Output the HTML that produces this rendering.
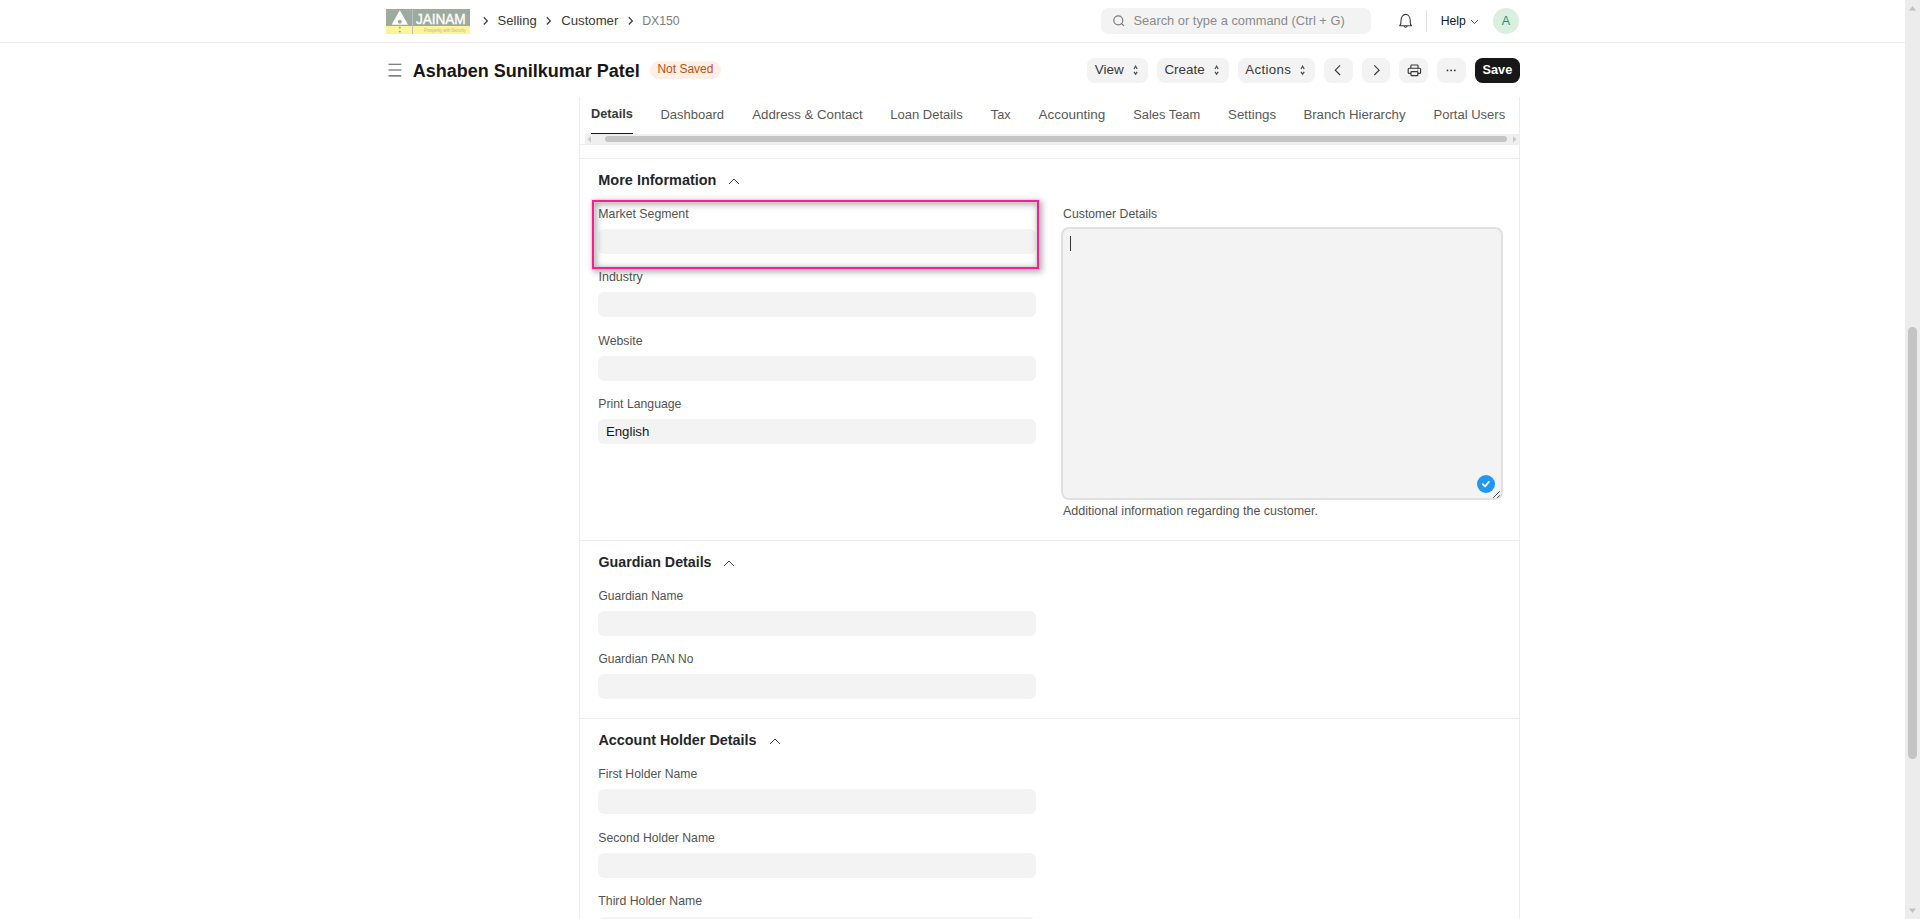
<!DOCTYPE html>
<html>
<head>
<meta charset="utf-8">
<style>
html,body{margin:0;padding:0;width:1920px;height:919px;overflow:hidden;background:#fff;}
body{font-family:"Liberation Sans",sans-serif;position:relative;color:#383838;}
.a{position:absolute;white-space:nowrap;line-height:1;}
svg{position:absolute;overflow:visible;}
.nav{position:absolute;left:0;top:0;width:1905px;height:42px;background:#fff;border-bottom:1px solid #ececec;}
.page{position:absolute;left:0;top:43px;width:1905px;height:876px;background:#fff;}
.btn{position:absolute;top:58px;height:25px;background:#f3f3f3;border-radius:7.5px;}
.card{position:absolute;left:579px;top:97px;width:939px;height:830px;border-left:1px solid #ededed;border-right:1px solid #ededed;background:#fff;}
.hline{position:absolute;height:1px;background:#ededed;}
.lbl{position:absolute;white-space:nowrap;line-height:1;color:#525252;}
.inp{position:absolute;left:598px;width:438px;height:25px;background:#f3f3f3;border-radius:6px;}
.sec{position:absolute;white-space:nowrap;line-height:1;font-weight:700;color:#1f272e;}
.tab{position:absolute;white-space:nowrap;line-height:1;color:#585858;top:108px;}
.sb{position:absolute;left:1905px;top:0;width:15px;height:919px;background:#ececec;}
</style>
</head>
<body>
<div class="page"></div>

<!-- NAVBAR -->
<div class="nav"></div>
<!-- logo -->
<div style="position:absolute;left:386px;top:9px;width:84px;height:25px;overflow:hidden;">
  <div style="position:absolute;left:0;top:0;width:84px;height:16.5px;background:#9dab9f;"></div>
  <div style="position:absolute;left:0;top:16.5px;width:84px;height:8.5px;background:#fcf39a;"></div>
  <div style="position:absolute;left:26px;top:0;width:1px;height:25px;background:#b8c3ba;"></div>
  <svg style="left:0;top:0" width="84" height="25" viewBox="0 0 84 25">
    <polygon points="13.8,1.2 5.6,15.8 22,15.8" fill="#fff"/>
    <circle cx="13.8" cy="12.7" r="2" fill="#9dab9f"/>
    <circle cx="13.8" cy="18.6" r="0.9" fill="#8e9a8f"/>
    <circle cx="13.8" cy="22.6" r="0.9" fill="#8e9a8f"/>
  </svg>
  <div class="a" style="left:30.2px;top:2.4px;font-size:15.3px;font-weight:400;color:#fff;transform:scaleX(0.895);transform-origin:0 0;letter-spacing:-0.1px;-webkit-text-stroke:0.35px #fff;">JAINAM</div>
  <div class="a" style="left:38px;top:18.6px;font-size:5px;color:#bdbc8e;transform:scaleX(0.8);transform-origin:0 0;">Prosperity with Security</div>
</div>
<!-- breadcrumbs -->
<svg style="left:481px;top:16px" width="8" height="10" viewBox="0 0 8 10"><path d="M2.8 1.3 L6.3 4.9 L2.8 8.5" fill="none" stroke="#383838" stroke-width="1.25"/></svg>
<div class="a" style="left:497.6px;top:14.09px;font-size:13px;color:#383838;">Selling</div>
<svg style="left:544px;top:16px" width="8" height="10" viewBox="0 0 8 10"><path d="M2.8 1.3 L6.3 4.9 L2.8 8.5" fill="none" stroke="#383838" stroke-width="1.25"/></svg>
<div class="a" style="left:561.2px;top:14.09px;font-size:13.2px;color:#383838;">Customer</div>
<svg style="left:626px;top:16px" width="8" height="10" viewBox="0 0 8 10"><path d="M2.8 1.3 L6.3 4.9 L2.8 8.5" fill="none" stroke="#383838" stroke-width="1.25"/></svg>
<div class="a" style="left:642.2px;top:14.6px;font-size:12.25px;color:#7c7c7c;">DX150</div>

<!-- search -->
<div style="position:absolute;left:1101px;top:8px;width:270px;height:26px;background:#f3f3f3;border-radius:7px;"></div>
<svg style="left:1112px;top:14px" width="14" height="14" viewBox="0 0 14 14"><circle cx="6.3" cy="6.3" r="4.5" fill="none" stroke="#7c7c7c" stroke-width="1.2"/><path d="M9.5 9.6 L11.6 11.5" stroke="#7c7c7c" stroke-width="1.2" stroke-linecap="round"/></svg>
<div class="a" style="left:1133.5px;top:15.2px;font-size:12.87px;color:#8a8a8a;">Search or type a command (Ctrl + G)</div>
<!-- bell -->
<svg style="left:1398px;top:13px" width="15" height="16" viewBox="0 0 15 16"><path d="M2.6 11.6 C2.8 10.6 3 9.5 3 7.6 C3 4.3 4.8 1.4 7.6 1.4 C10.4 1.4 12.2 4.3 12.2 7.6 C12.2 9.5 12.4 10.6 12.6 11.6 L13.4 12.2 C13.6 12.5 13.4 12.8 13.1 12.8 L2.1 12.8 C1.8 12.8 1.6 12.5 1.8 12.2 Z" fill="none" stroke="#383838" stroke-width="1.1" stroke-linejoin="round"/><path d="M6.2 13 C6.2 14.6 9 14.6 9 13" fill="none" stroke="#383838" stroke-width="1.1"/></svg>
<div style="position:absolute;left:1426px;top:10px;width:1px;height:22px;background:#e2e2e2;"></div>
<div class="a" style="left:1440.7px;top:15.1px;font-size:12.25px;color:#171717;">Help</div>
<svg style="left:1470px;top:19px" width="9" height="6" viewBox="0 0 9 6"><path d="M1 1 L4.5 4.5 L8 1" fill="none" stroke="#555" stroke-width="1"/></svg>
<div style="position:absolute;left:1493px;top:8px;width:26px;height:26px;border-radius:50%;background:#daf0df;"></div>
<div class="a" style="left:1501.8px;top:15px;font-size:12.44px;color:#2d8a6c;">A</div>

<!-- PAGE HEAD -->
<svg style="left:388px;top:63px" width="14" height="14" viewBox="0 0 14 14"><path d="M0.5 1.2 H13.3 M0.5 7 H13.3 M0.5 12.8 H13.3" stroke="#555" stroke-width="1.15"/></svg>
<div class="a" style="left:412.7px;top:61.76px;font-size:18px;font-weight:700;color:#171717;">Ashaben Sunilkumar Patel</div>
<div style="position:absolute;left:650px;top:61px;width:71px;height:18px;border-radius:9px;background:#fef0e6;"></div>
<div class="a" style="left:657.4px;top:62.64px;font-size:12px;color:#c24e12;">Not Saved</div>

<div class="btn" style="left:1087px;width:61px;"></div>
<div class="a" style="left:1094.7px;top:63px;font-size:13.49px;color:#383838;">View</div>
<div class="btn" style="left:1157px;width:72px;"></div>
<div class="a" style="left:1164.4px;top:63px;font-size:13.43px;color:#383838;">Create</div>
<div class="btn" style="left:1238px;width:77px;"></div>
<div class="a" style="left:1245.2px;top:63.2px;font-size:13.3px;letter-spacing:0.34px;color:#383838;">Actions</div>
<svg style="left:1132px;top:64px" width="8" height="12" viewBox="0 0 8 12"><path d="M2 5 L3.6 2.3 L5.2 5 M2 7.8 L3.6 10.2 L5.2 7.8" fill="none" stroke="#4a4a4a" stroke-width="1.2"/></svg>
<svg style="left:1213px;top:64px" width="8" height="12" viewBox="0 0 8 12"><path d="M2 5 L3.6 2.3 L5.2 5 M2 7.8 L3.6 10.2 L5.2 7.8" fill="none" stroke="#4a4a4a" stroke-width="1.2"/></svg>
<svg style="left:1299px;top:64px" width="8" height="12" viewBox="0 0 8 12"><path d="M2 5 L3.6 2.3 L5.2 5 M2 7.8 L3.6 10.2 L5.2 7.8" fill="none" stroke="#4a4a4a" stroke-width="1.2"/></svg>

<div class="btn" style="left:1324px;width:29px;"></div>
<svg style="left:1324px;top:58px" width="29" height="25" viewBox="0 0 29 25"><path d="M16.1 7.4 L11.3 12.2 L16.1 17" fill="none" stroke="#383838" stroke-width="1.15"/></svg>
<div class="btn" style="left:1362px;width:28px;"></div>
<svg style="left:1362px;top:58px" width="28" height="25" viewBox="0 0 28 25"><path d="M12.3 7.4 L17.1 12.2 L12.3 17" fill="none" stroke="#383838" stroke-width="1.15"/></svg>
<div class="btn" style="left:1399px;width:29px;"></div>
<svg style="left:1399px;top:58px" width="29" height="25" viewBox="0 0 29 25"><path d="M11.9 10.2 V7.8 C11.9 7.3 12.2 7 12.7 7 H18.2 C18.7 7 19 7.3 19 7.8 V10.2" fill="none" stroke="#383838" stroke-width="1.15"/><path d="M12 15.4 H10.2 C9.6 15.4 9.2 15 9.2 14.4 V11.2 C9.2 10.6 9.6 10.2 10.2 10.2 H20.6 C21.2 10.2 21.6 10.6 21.6 11.2 V14.4 C21.6 15 21.2 15.4 20.6 15.4 H18.8" fill="none" stroke="#383838" stroke-width="1.15"/><rect x="12" y="13.6" width="6.8" height="4" rx="0.6" fill="none" stroke="#383838" stroke-width="1.15"/><circle cx="18.6" cy="12" r="0.5" fill="#555"/></svg>
<div class="btn" style="left:1437px;width:29px;"></div>
<svg style="left:1437px;top:58px" width="29" height="25" viewBox="0 0 29 25"><circle cx="10.5" cy="12.4" r="0.9" fill="#383838"/><circle cx="14.1" cy="12.4" r="0.9" fill="#383838"/><circle cx="17.8" cy="12.4" r="0.9" fill="#383838"/></svg>
<div class="btn" style="left:1475px;width:45px;background:#171717;"></div>
<div class="a" style="left:1482.5px;top:64px;font-size:12.72px;font-weight:700;color:#fff;">Save</div>

<!-- CARD -->
<div class="card"></div>

<!-- tabs -->
<div class="tab" style="left:591.1px;top:108px;font-weight:700;font-size:12.72px;color:#383838;">Details</div>
<div style="position:absolute;left:591px;top:133px;width:42px;height:1px;background:#171717;"></div>
<div class="tab" style="left:660.4px;font-size:13px;">Dashboard</div>
<div class="tab" style="left:752.2px;font-size:13.25px;">Address &amp; Contact</div>
<div class="tab" style="left:890.3px;font-size:13.02px;">Loan Details</div>
<div class="tab" style="left:990.8px;top:108.6px;font-size:12.72px;">Tax</div>
<div class="tab" style="left:1038.4px;font-size:13.5px;">Accounting</div>
<div class="tab" style="left:1133.2px;top:108.5px;font-size:12.89px;">Sales Team</div>
<div class="tab" style="left:1228.1px;font-size:13.28px;">Settings</div>
<div class="tab" style="left:1303.4px;font-size:13.22px;">Branch Hierarchy</div>
<div class="tab" style="left:1433.6px;font-size:13.03px;">Portal Users</div>
<!-- tab scrollbar -->
<div style="position:absolute;left:585px;top:134px;width:934px;height:10px;background:#efefef;"></div>
<div style="position:absolute;left:605px;top:136px;width:902px;height:6px;background:#c5c5c5;border-radius:3px;"></div>
<svg style="left:587px;top:135.5px" width="5" height="7" viewBox="0 0 5 7"><path d="M4 0.2 L0.8 3.3 L4 6.4 Z" fill="#c6c6c6"/></svg>
<svg style="left:1512px;top:135.5px" width="5" height="7" viewBox="0 0 5 7"><path d="M1 0.2 L4.2 3.3 L1 6.4 Z" fill="#c6c6c6"/></svg>
<div class="hline" style="left:580px;top:144px;width:939px;background:#efefef;"></div>
<div class="hline" style="left:580px;top:158px;width:939px;"></div>

<!-- More Information -->
<div class="sec" style="left:598.3px;top:172.75px;font-size:14.47px;">More Information</div>
<svg style="left:728px;top:177px" width="12" height="8" viewBox="0 0 12 8"><path d="M1 7 L6 2 L11 7" fill="none" stroke="#444" stroke-width="1"/></svg>

<div class="lbl" style="left:598.3px;top:207.87px;font-size:12.32px;">Market Segment</div>
<div class="inp" style="top:229px;"></div>
<div class="lbl" style="left:598.5px;top:270.83px;font-size:12.48px;">Industry</div>
<div class="inp" style="top:292px;"></div>
<div class="lbl" style="left:598.3px;top:335.19px;font-size:12.3px;">Website</div>
<div class="inp" style="top:356px;"></div>
<div class="lbl" style="left:598.3px;top:398.23px;font-size:12.25px;">Print Language</div>
<div class="inp" style="top:419px;"></div>
<div class="a" style="left:605.9px;top:425px;font-size:13.26px;color:#171717;">English</div>

<!-- pink annotation -->
<div style="position:absolute;left:592px;top:200px;width:447px;height:69px;box-sizing:border-box;border:2px solid #ff1b8d;box-shadow:0 0 0 1px rgba(200,222,212,0.5), 1.5px 1.5px 6px 1px rgba(0,0,0,0.32), inset 0 0 0 1px rgba(200,222,212,0.5), inset 1.5px 1.5px 6px 1px rgba(0,0,0,0.32);"></div>

<div class="lbl" style="left:1063.1px;top:208.22px;font-size:12.26px;">Customer Details</div>
<div style="position:absolute;left:1061px;top:227px;width:438px;height:269px;background:#f3f3f3;border:2px solid #e0e0e0;border-radius:8px;"></div>
<div style="position:absolute;left:1070px;top:236px;width:1px;height:15px;background:#333;"></div>
<div style="position:absolute;left:1477px;top:475px;width:18px;height:18px;border-radius:50%;background:#2196f5;"></div>
<svg style="left:1477px;top:475px" width="18" height="18" viewBox="0 0 18 18"><path d="M5.7 9.2 L8.1 11.4 L12 6.8" fill="none" stroke="#fff" stroke-width="1.7" stroke-linecap="round" stroke-linejoin="round"/></svg>
<svg style="left:1492px;top:490px" width="9" height="9" viewBox="0 0 9 9"><path d="M1.4 7.6 L7.6 1.4 M5.5 7.6 L7.6 5.5" stroke="#4a4a4a" stroke-width="1" stroke-linecap="round"/></svg>
<div class="lbl" style="left:1063px;top:504.92px;font-size:12.5px;">Additional information regarding the customer.</div>

<div class="hline" style="left:580px;top:540px;width:939px;"></div>

<!-- Guardian -->
<div class="sec" style="left:598.5px;top:554.85px;font-size:14.23px;">Guardian Details</div>
<svg style="left:723px;top:559px" width="12" height="8" viewBox="0 0 12 8"><path d="M1 7 L6 2 L11 7" fill="none" stroke="#444" stroke-width="1"/></svg>
<div class="lbl" style="left:598.5px;top:590.34px;font-size:12px;">Guardian Name</div>
<div class="inp" style="top:611px;"></div>
<div class="lbl" style="left:598.5px;top:653.36px;font-size:11.98px;">Guardian PAN No</div>
<div class="inp" style="top:674px;"></div>

<div class="hline" style="left:580px;top:718px;width:939px;"></div>

<!-- Account Holder -->
<div class="sec" style="left:598.5px;top:732.93px;font-size:14.37px;">Account Holder Details</div>
<svg style="left:769px;top:737px" width="12" height="8" viewBox="0 0 12 8"><path d="M1 7 L6 2 L11 7" fill="none" stroke="#444" stroke-width="1"/></svg>
<div class="lbl" style="left:598.3px;top:768.1px;font-size:12.2px;">First Holder Name</div>
<div class="inp" style="top:789px;"></div>
<div class="lbl" style="left:598.3px;top:832.0px;font-size:12.2px;">Second Holder Name</div>
<div class="inp" style="top:853px;"></div>
<div class="lbl" style="left:598.3px;top:894.9px;font-size:12.29px;">Third Holder Name</div>
<div class="inp" style="top:916.5px;"></div>

<!-- right scrollbar -->
<div class="sb"></div>
<svg style="left:1905px;top:0" width="15" height="919" viewBox="0 0 15 919"><path d="M4 10.5 L7.5 6 L11 10.5 Z" fill="#c0c0c0"/><path d="M4 908.5 L7.5 913 L11 908.5 Z" fill="#c0c0c0"/></svg>
<div style="position:absolute;left:1908px;top:327px;width:9px;height:432px;border-radius:4.5px;background:#c4c4c4;"></div>
</body>
</html>
